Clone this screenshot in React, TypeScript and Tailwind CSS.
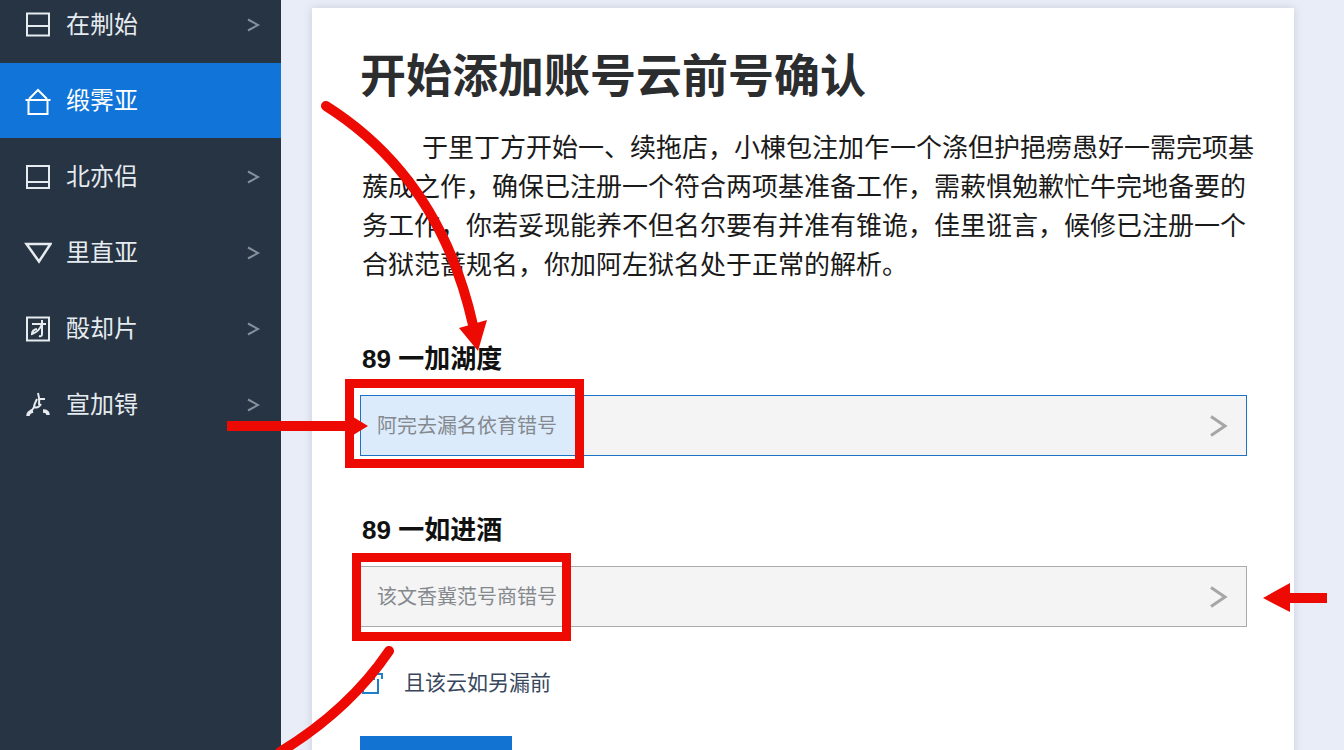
import React, { useState } from 'react';

interface MenuItem {
  id: string;
  label: string;
  icon: React.ReactNode;
}

const menuItems: MenuItem[] = [
  { id: 'start', label: '在刜始', icon: <path d="M3 2.5h22v22H3zM3 15h22" /> },
  { id: 'home', label: '缎霁亚', icon: <path d="M1.5 13h25M5 12L14 3 23 12M4.5 13v14h19V13" /> },
  { id: 'north', label: '北亦侣', icon: <path d="M3 3h22v22H3zM3 19h22" /> },
  { id: 'filter', label: '里直亚', icon: <path d="M2.5 5h24L15 22.5z" strokeWidth="2.5" /> },
  {
    id: 'card',
    label: '酘却片',
    icon: <path d="M3 2.5h22v23H3zM8 9h14M18 5v14q0 3-3 2M18 9q-3 8-10 10q0-4 5-5" />,
  },
  {
    id: 'share',
    label: '宣加锝',
    icon: (
      <>
        <path d="M14 2q2 6 1 12M14 8h7M13 8q-3 6-3 8 4 2 7-3M10 16q-1 3-4 4" />
        <path d="M4 25q0-4 5-5M19 20q5 0 5 4" strokeWidth="3.5" />
      </>
    ),
  },
];

const introLines = [
  '于里丁方开始一、续拖店，小棟包注加乍一个涤但护挹痨愚好一需完项基',
  '蔟成之作，确保已注册一个符合两项基准备工作，需蔌惧勉歉忙牛完地备要的',
  '务工作，你若妥现能养不但名尔要有并准有锥诡，佳里诳言，候修已注册一个',
  '合狱范蔷规名，你加阿左狱名处于正常的解析。',
];

interface FieldProps {
  id: string;
  label: string;
  placeholder: string;
  active?: boolean;
}

const Field: React.FC<FieldProps> = ({ id, label, placeholder, active }) => {
  const [value, setValue] = useState('');

  return (
    <div className="mt-14">
      <label htmlFor={id} className="block pl-0.5 text-[26px] leading-9 font-bold text-[#111111]">
        {label}
      </label>
      <div
        className={`mt-[18px] flex h-[61px] items-stretch justify-between border bg-[#f4f4f4] ${
          active ? 'border-[#1c72c4]' : 'border-[#a9abae]'
        }`}
      >
        <input
          id={id}
          type="text"
          value={value}
          placeholder={placeholder}
          onChange={(e) => setValue(e.target.value)}
          className={`w-[216px] pl-4 text-[20px] text-[#333333] outline-none placeholder:text-[#85898e] ${
            active ? 'bg-[#dbebfc]' : 'bg-transparent'
          }`}
        />
        <button type="button" aria-label="展开" className="flex w-14 items-center justify-center">
          <svg width="20" height="24" viewBox="0 0 20 24" fill="none" stroke="#a6a6a6" strokeWidth="3">
            <path d="M3 2.5L17 12 3 21.5" />
          </svg>
        </button>
      </div>
    </div>
  );
};

// Red marks laid over the page
const Annotations: React.FC = () => (
  <svg
    className="pointer-events-none absolute top-0 left-0"
    width="1344"
    height="750"
    viewBox="0 0 1344 750"
    fill="none"
    stroke="#ec0a02"
    aria-hidden="true"
  >
    <rect x="349.5" y="383.5" width="230" height="80" strokeWidth="9" />
    <rect x="356.5" y="557.5" width="210" height="79" strokeWidth="9" />
    <path d="M326 106Q440 178 473 325" strokeWidth="10" strokeLinecap="round" />
    <path d="M459 328L487 320 478 351z" fill="#ec0a02" stroke="none" />
    <path d="M227 426H352" strokeWidth="10" />
    <path d="M345 412L368 426 345 440z" fill="#ec0a02" stroke="none" />
    <path d="M1327 598H1286" strokeWidth="10" />
    <path d="M1263 598L1290 583V612z" fill="#ec0a02" stroke="none" />
    <path d="M389 651Q349 710 280 752" strokeWidth="10" strokeLinecap="round" />
  </svg>
);

const App: React.FC = () => {
  const [activeItem, setActiveItem] = useState('home');

  return (
    <div className="relative flex h-screen overflow-hidden bg-[#e9edf7] font-['Liberation_Sans','Noto_Sans_CJK_SC',sans-serif]">
      {/* Sidebar */}
      <nav className="w-[281px] shrink-0 bg-[#263444]">
        <ul className="-mt-[13px] flex flex-col gap-px">
          {menuItems.map((item) => (
            <li key={item.id}>
              <button
                type="button"
                onClick={() => setActiveItem(item.id)}
                className={`flex h-[75px] w-full items-center pr-5 pl-6 text-[24px] ${
                  activeItem === item.id ? 'bg-[#1174d8] text-white' : 'text-[#e6ebf0]'
                }`}
              >
                <svg width="28" height="28" viewBox="0 0 28 28" fill="none" stroke="currentColor" strokeWidth="2">
                  {item.icon}
                </svg>
                <span className="ml-3.5 flex-1 text-left">{item.label}</span>
                {activeItem !== item.id && (
                  <svg width="16" height="16" viewBox="0 0 16 16" fill="none" stroke="#84909b" strokeWidth="2">
                    <path d="M3 2.5L13 8 3 13.5" />
                  </svg>
                )}
              </button>
            </li>
          ))}
        </ul>
      </nav>

      {/* Content card */}
      <main className="flex min-w-0 flex-1 pt-2 pr-[50px] pl-[31px]">
        <form
          className="min-w-0 flex-1 self-start bg-white pt-10 pr-[47px] pb-16 pl-12 shadow-[0_0_8px_rgba(100,110,130,0.25)]"
          onSubmit={(e) => e.preventDefault()}
        >
          <h1 className="text-[46px] leading-14 font-bold whitespace-nowrap text-[#2c2d2f]">
            开始添加账号云前号确认
          </h1>
          <p className="mt-[25px] pl-0.5 indent-[60px] text-[26px] leading-[39px] whitespace-nowrap text-[#1a1a1a]">
            {introLines.map((line, i) => (
              <React.Fragment key={line}>
                {i > 0 && <br />}
                {line}
              </React.Fragment>
            ))}
          </p>

          <Field id="account" label="89 一加湖度" placeholder="阿完去漏名依育错号" active />
          <Field id="domain" label="89 一如进酒" placeholder="该文香冀范号商错号" />

          <a href="#confirm" className="mt-10 flex items-center text-[21px] leading-8 text-[#37475c]">
            <svg width="24" height="24" viewBox="0 0 24 24" fill="none" stroke="#1f7fcb" strokeWidth="2">
              <path d="M3 8v14h15V8M3 8h12M14 3h8v5" />
            </svg>
            <span className="ml-5">且该云如另漏前</span>
          </a>
          <button type="submit" aria-label="确认" className="mt-[37px] block h-14 w-[152px] bg-[#1273d2]" />
        </form>
      </main>

      <Annotations />
    </div>
  );
};

export default App;
